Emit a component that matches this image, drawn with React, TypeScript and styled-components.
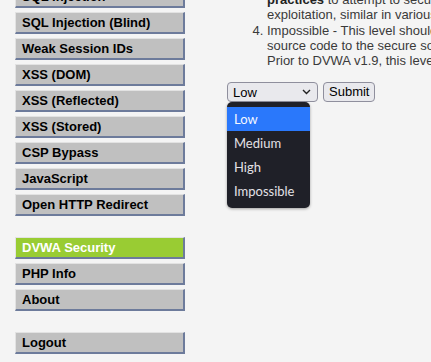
import React from 'react'
import styled, { createGlobalStyle } from 'styled-components'

const GlobalStyle = createGlobalStyle`
    html, body {
        margin: 0;
        padding: 0;
        background: #f4f4f4;
        overflow: hidden;
    }
    body {
        font-family: 'Liberation Sans', Arial, sans-serif;
        font-size: 13px;
    }
`

interface MenuGroup {
    items: string[]
}

const MENU_GROUPS: MenuGroup[] = [
    {
        items: [
            'SQL Injection',
            'SQL Injection (Blind)',
            'Weak Session IDs',
            'XSS (DOM)',
            'XSS (Reflected)',
            'XSS (Stored)',
            'CSP Bypass',
            'JavaScript',
            'Open HTTP Redirect',
        ],
    },
    { items: ['DVWA Security', 'PHP Info', 'About'] },
    { items: ['Logout'] },
]

const SELECTED = 'DVWA Security'
const LEVELS = ['Low', 'Medium', 'High', 'Impossible']

const App = () => {
    return (
        <>
            <GlobalStyle />
            <Page>
                <Menu>
                    {MENU_GROUPS.map((group, gi) => (
                        <MenuList key={gi}>
                            {group.items.map((item) => (
                                <MenuItem key={item} selected={item === SELECTED}>
                                    {item}
                                </MenuItem>
                            ))}
                        </MenuList>
                    ))}
                </Menu>
                <Body>
                    <Levels start={3}>
                        <li>
                            High - This option is an extension to the medium difficulty, with a mixture of harder or alternative bad
                            <br />
                            <b>practices</b> to attempt to secure the code. The vulnerability may not allow the same extent of the
                            <br />
                            exploitation, similar in various Capture The Flags (CTFs) competitions.
                        </li>
                        <li>
                            Impossible - This level should be secure against all vulnerabilities. It is used to compare the vulnerable
                            <br />
                            source code to the secure source code.
                            <br />
                            Prior to DVWA v1.9, this level was known as 'high'.
                        </li>
                    </Levels>
                    <Form>
                        <SelectWrap>
                            <SelectBox>
                                <span>Low</span>
                                <svg width="9" height="6" viewBox="0 0 9 6">
                                    <path d="M1 1l3.5 3.5L8 1" fill="none" stroke="#222" strokeWidth="1.4" />
                                </svg>
                            </SelectBox>
                            <Dropdown>
                                {LEVELS.map((level) => (
                                    <Option key={level} active={level === 'Low'}>
                                        {level}
                                    </Option>
                                ))}
                            </Dropdown>
                        </SelectWrap>
                        <SubmitButton type="button">Submit</SubmitButton>
                    </Form>
                </Body>
            </Page>
        </>
    )
}

export default App

const Page = styled.div`
    display: flex;
    align-items: flex-start;
    width: 431px;
    height: 362px;
    overflow: hidden;
`

const Menu = styled.div`
    width: 170px;
    margin: -14px 0 0 15px;
    flex: 0 0 auto;
`

const MenuList = styled.ul`
    list-style: none;
    margin: 0 0 21px;
    padding: 0;
    display: flex;
    flex-direction: column;
    gap: 4px;
`

const MenuItem = styled.li<{ selected?: boolean }>`
    box-sizing: border-box;
    height: 22px;
    padding: 0 0 0 6px;
    line-height: 20px;
    font-weight: bold;
    font-size: 13px;
    white-space: nowrap;
    color: ${(props) => (props.selected ? '#ffffff' : '#000000')};
    background: ${(props) => (props.selected ? '#99cc33' : '#c0c0c0')};
    border-top: 1px solid #e2e2e2;
    border-left: 1px solid #e2e2e2;
    border-right: 2px solid #6d7b9b;
    border-bottom: 2px solid #6d7b9b;
`

const Body = styled.div`
    margin-left: 42px;
    flex: 0 0 auto;
    color: #3a3a3a;
`

const Levels = styled.ol`
    margin: -23px 0 14px;
    padding-left: 40px;
    line-height: 15px;
    white-space: nowrap;

    & li + li {
        margin-top: 1px;
    }

    & b {
        color: #222;
    }
`

const Form = styled.div`
    display: flex;
    gap: 5px;
    align-items: flex-start;
`

const SelectWrap = styled.div`
    position: relative;
`

const SelectBox = styled.div`
    box-sizing: border-box;
    width: 91px;
    height: 20px;
    padding: 0 6px 0 5px;
    display: flex;
    align-items: center;
    justify-content: space-between;
    background: #e9e9ed;
    border: 1px solid #8f8f9d;
    border-radius: 4px;
    color: #000;
    font-size: 13px;
`

const Dropdown = styled.div`
    position: absolute;
    top: 20px;
    left: 0;
    width: 83px;
    padding: 5px 0 5px;
    background: #1f2028;
    border-radius: 5px;
    box-shadow: 0 1px 3px rgba(0, 0, 0, 0.35);
    font-family: Lato, 'Noto Sans', sans-serif;
    font-size: 13px;
`

const Option = styled.div<{ active?: boolean }>`
    height: 24px;
    line-height: 24px;
    padding-left: 7px;
    color: ${(props) => (props.active ? '#f4f7ff' : '#e3e1e6')};
    background: ${(props) => (props.active ? '#2a78fb' : 'transparent')};
`

const SubmitButton = styled.button`
    box-sizing: border-box;
    height: 20px;
    padding: 0 5px;
    background: #e9e9ed;
    border: 1px solid #8f8f9d;
    border-radius: 4px;
    color: #000;
    font-family: 'Liberation Sans', Arial, sans-serif;
    font-size: 13px;
    line-height: 18px;
`
